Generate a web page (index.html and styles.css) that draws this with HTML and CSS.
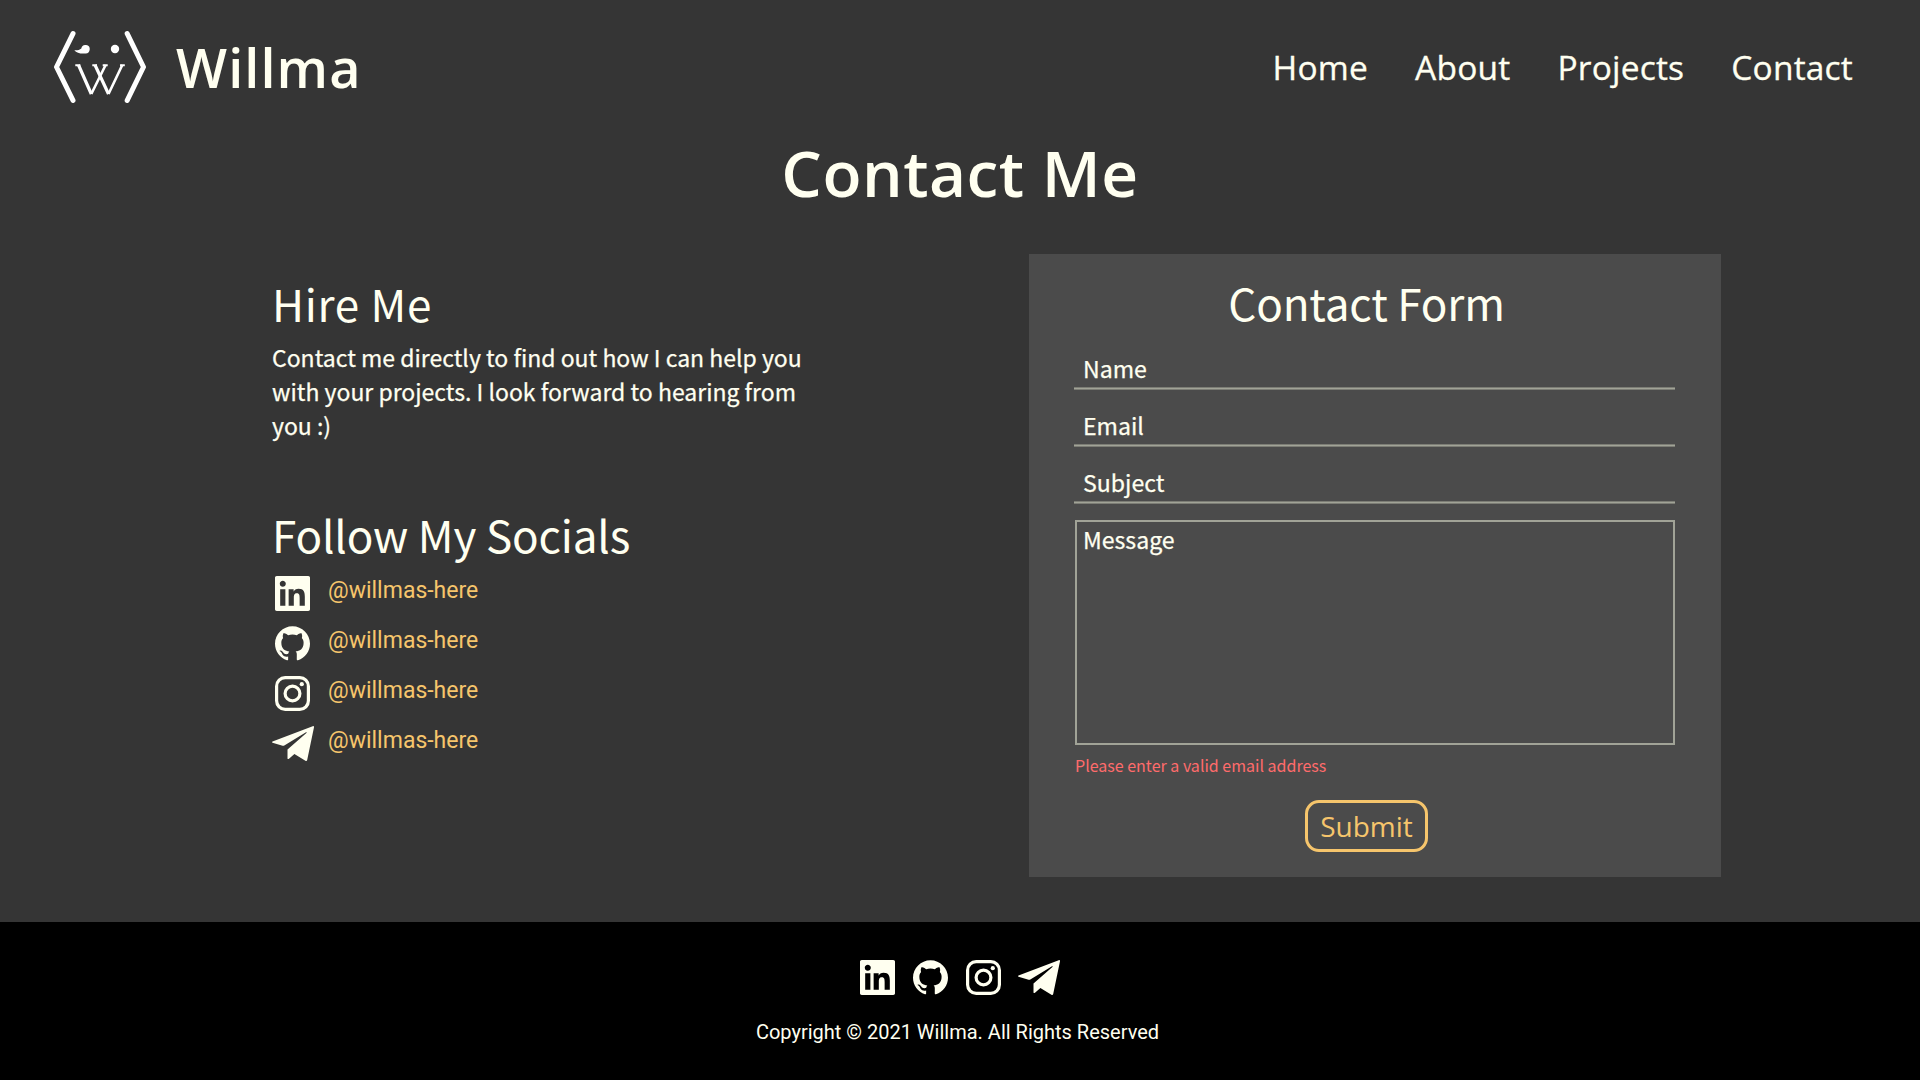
FILE: index.html
```html
<!DOCTYPE html>
<html lang="en">
<head>
<meta charset="utf-8">
<title>Willma – Contact</title>
<link rel="stylesheet" href="styles.css">
</head>
<body>
<svg class="sprite" aria-hidden="true">
  <symbol id="linkedin" viewBox="0 0 24 24"><path d="M20.447 20.452h-3.554v-5.569c0-1.328-.027-3.037-1.852-3.037-1.853 0-2.136 1.445-2.136 2.939v5.667H9.351V9h3.414v1.561h.046c.477-.9 1.637-1.85 3.37-1.85 3.601 0 4.267 2.37 4.267 5.455v6.286zM5.337 7.433c-1.144 0-2.063-.926-2.063-2.065 0-1.138.92-2.063 2.063-2.063 1.14 0 2.064.925 2.064 2.063 0 1.139-.925 2.065-2.064 2.065zm1.782 13.019H3.555V9h3.564v11.452zM22.8 0H1.2C.5 0 0 .5 0 1.2v21.6C0 23.5.5 24 1.2 24h21.6c.7 0 1.2-.5 1.2-1.2V1.2C24 .5 23.5 0 22.8 0z"/></symbol>
  <symbol id="github" viewBox="0 0 24 24"><path d="M12 .1c-6.63 0-12 5.373-12 12 0 5.303 3.438 9.8 8.205 11.385.6.113.82-.258.82-.577 0-.285-.01-1.04-.015-2.04-3.338.724-4.042-1.61-4.042-1.61-.546-1.385-1.335-1.755-1.335-1.755-1.087-.744.084-.729.084-.729 1.205.084 1.838 1.236 1.838 1.236 1.07 1.835 2.809 1.305 3.495.998.108-.776.417-1.305.76-1.605-2.665-.3-5.466-1.332-5.466-5.93 0-1.31.465-2.38 1.235-3.22-.135-.303-.54-1.523.105-3.176 0 0 1.005-.322 3.3 1.23.96-.267 1.98-.399 3-.405 1.02.006 2.04.138 3 .405 2.28-1.552 3.285-1.23 3.285-1.23.645 1.653.24 2.873.12 3.176.765.84 1.23 1.91 1.23 3.22 0 4.61-2.805 5.625-5.475 5.92.42.36.81 1.096.81 2.22 0 1.606-.015 2.896-.015 3.286 0 .315.21.69.825.57C20.565 21.895 24 17.395 24 12.1c0-6.627-5.373-12-12-12"/></symbol>
  <symbol id="instagram" viewBox="0 0 35 35"><rect x="1.6" y="1.6" width="31.8" height="31.8" rx="8.6" fill="none" stroke="currentColor" stroke-width="3.2"/><circle cx="17.5" cy="17.5" r="7.4" fill="none" stroke="currentColor" stroke-width="3.2"/><circle cx="26.8" cy="8.2" r="2.1"/></symbol>
  <symbol id="telegram" viewBox="0 0 42 35"><path d="M.5 15.6 40.7.2Q42.2-.2 42 1.2L35.2 34Q34.8 35.4 33.4 34.7L22.4 28.1 17 32.7Q15.6 33.7 15.5 32.2V23.6L34.7 6.7Q34.9 6 34 6.3L12.3 19.5Q11.5 20 10.6 19.7L.5 16.7Q-.3 16.2.5 15.6Z"/></symbol>
</svg>

<header class="header">
  <a class="brand">
    <svg class="logo" viewBox="0 0 92 72">
      <g fill="none" stroke="#fff">
        <path d="M19 2.6 2.5 36 19 69.4M73.2 2.6 89.500 36 73.200 69.400" stroke-width="5" stroke-linecap="round" stroke-linejoin="round"/>
        <path d="M24.500 34 37.300 63M41 34 54.500 63" stroke-width="3.200"/>
        <path d="M37.300 63 51.600 34M54.500 63 68.300 34" stroke-width="2.600"/>
        <path d="M21.300 34.200h5M38.300 34.200h4.700M48.700 34.200h5M66 34.200h4.800" stroke-width="2"/>
      </g>
      <path fill="#fff" d="M20.300 19.200c3 .2 5.300-.3 7-1.800A4.250 4.250 0 1 1 31 22.400c-4 .6-8.500-.6-10.700-3.200Z"/>
      <circle cx="61" cy="18" r="4.200" fill="#fff"/>
    </svg>
    <span class="brand-name">Willma</span>
  </a>
  <nav class="nav"><a>Home</a><a>About</a><a>Projects</a><a>Contact</a></nav>
</header>

<h1 class="page-title">Contact Me</h1>

<main class="content">
  <div class="details">
    <section>
      <h2 class="heading heading-wide">Hire Me</h2>
      <p class="intro">Contact me directly to find out how I can help you with your projects. I look forward to hearing from you :)</p>
    </section>
    <section class="socials">
      <h2 class="heading">Follow My Socials</h2>
      <ul class="social-list">
        <li><span class="slot"><svg class="icon"><use href="#linkedin"/></svg></span><a>@willmas-here</a></li>
        <li><span class="slot"><svg class="icon"><use href="#github"/></svg></span><a>@willmas-here</a></li>
        <li><span class="slot"><svg class="icon"><use href="#instagram"/></svg></span><a>@willmas-here</a></li>
        <li><span class="slot"><svg class="icon plane"><use href="#telegram"/></svg></span><a>@willmas-here</a></li>
      </ul>
    </section>
  </div>

  <form class="form">
    <h2 class="heading form-title">Contact Form</h2>
    <div class="fields">
      <input type="text" placeholder="Name">
      <input type="text" placeholder="Email">
      <input type="text" placeholder="Subject">
      <textarea placeholder="Message"></textarea>
    </div>
    <p class="error">Please enter a valid email address</p>
    <button class="submit" type="button">Submit</button>
  </form>
</main>

<footer class="footer">
  <div class="footer-icons">
    <svg class="icon"><use href="#linkedin"/></svg>
    <svg class="icon"><use href="#github"/></svg>
    <svg class="icon"><use href="#instagram"/></svg>
    <svg class="icon plane"><use href="#telegram"/></svg>
  </div>
  <p class="copyright">Copyright © 2021 Willma. All Rights Reserved</p>
</footer>
</body>
</html>
```
FILE: styles.css
```css
* { box-sizing: border-box; margin: 0; padding: 0; }

body {
  min-height: 100vh;
  display: flex;
  flex-direction: column;
  background: #353535;
  color: #fffff0;
  font-family: "Noto Sans CJK SC", "Noto Sans", sans-serif;
}

.sprite { display: none; }

.header {
  height: 134px;
  padding: 0 67px 0 54px;
  display: flex;
  align-items: center;
  justify-content: space-between;
}
.brand { display: flex; align-items: center; gap: 30px; }
.logo { width: 92px; height: 72px; }
.brand-name {
  font: 600 54px/72px "Open Sans", sans-serif;
  letter-spacing: 1.1px;
}
.nav {
  display: flex;
  gap: 47px;
  font: 400 33.5px/50px "Open Sans", sans-serif;
  letter-spacing: 0.2px;
  -webkit-text-stroke: 0.3px;
}

.page-title {
  margin-bottom: 42px;
  text-align: center;
  font: 600 64px/78px "Open Sans", sans-serif;
  letter-spacing: 0.5px;
}

.content {
  display: flex;
  justify-content: space-between;
  padding: 0 199px 0 272px;
}
.details { width: 545px; padding-top: 19px; }
.heading {
  font-weight: 400;
  font-size: 44px;
  line-height: 60px;
  letter-spacing: -0.15px;
}
.heading-wide { letter-spacing: 0.7px; }
.intro {
  margin-top: 7px;
  font-size: 23px;
  line-height: 34px;
  -webkit-text-stroke: 0.25px;
}
.socials { margin-top: 62px; }
.social-list { margin-top: 12px; list-style: none; }
.social-list li {
  height: 50px;
  display: flex;
  align-items: flex-start;
  gap: 14px;
  color: #f6c56c;
  font: 400 23px/30px Roboto, sans-serif;
}
.slot { width: 42px; display: flex; color: #fffff0; }
.icon { width: 35px; height: 35px; fill: currentColor; }
.slot .icon { margin-left: 3px; }
.icon.plane { width: 42px; }
.slot .plane { margin-left: 0; }

.form {
  width: 692px;
  padding: 18px 62px 25px 45px;
  background: #4b4b4b;
}
.form-title { text-align: center; }
.fields {
  width: 601px;
  margin-top: 14px;
  display: flex;
  flex-direction: column;
}
.fields input,
.fields textarea {
  border: 0;
  outline: 0;
  background: none;
  color: inherit;
  font-family: inherit;
  font-size: 23.1px;
  -webkit-text-stroke: 0.25px;
}
.fields input {
  height: 44px;
  margin-bottom: 13px;
  padding: 0 9px;
  background: linear-gradient(#7c7d75 1px, #a1a397 1px, #a1a397 2px, #7c7d75 2px) bottom / 100% 3px no-repeat;
}
.fields textarea {
  height: 225px;
  margin: 3px 0 0 1px;
  padding: 0 6px;
  border: 2px solid #a1a397;
  line-height: 34px;
  resize: none;
}
.fields ::placeholder { color: #fffff0; opacity: 1; }
.error { margin: 8px 0 0 1px; color: #ff6b6b; font-size: 16px; line-height: 24px; }
.submit {
  display: block;
  width: 123px;
  height: 52px;
  margin: 23px auto 0;
  border: 3px solid #f6c56c;
  border-radius: 14px;
  background: none;
  color: #f6c56c;
  font: 400 28px/46px "Open Sans", sans-serif;
}

.footer {
  flex: 1;
  margin-top: 45px;
  padding-top: 37.5px;
  background: #000;
}
.footer-icons { display: flex; justify-content: center; gap: 18px; }
.footer-icons .plane { margin-left: -1px; }
.copyright {
  margin-top: 25.5px;
  padding-right: 5px;
  text-align: center;
  font: 400 20px/24px Roboto, sans-serif;
}
```
